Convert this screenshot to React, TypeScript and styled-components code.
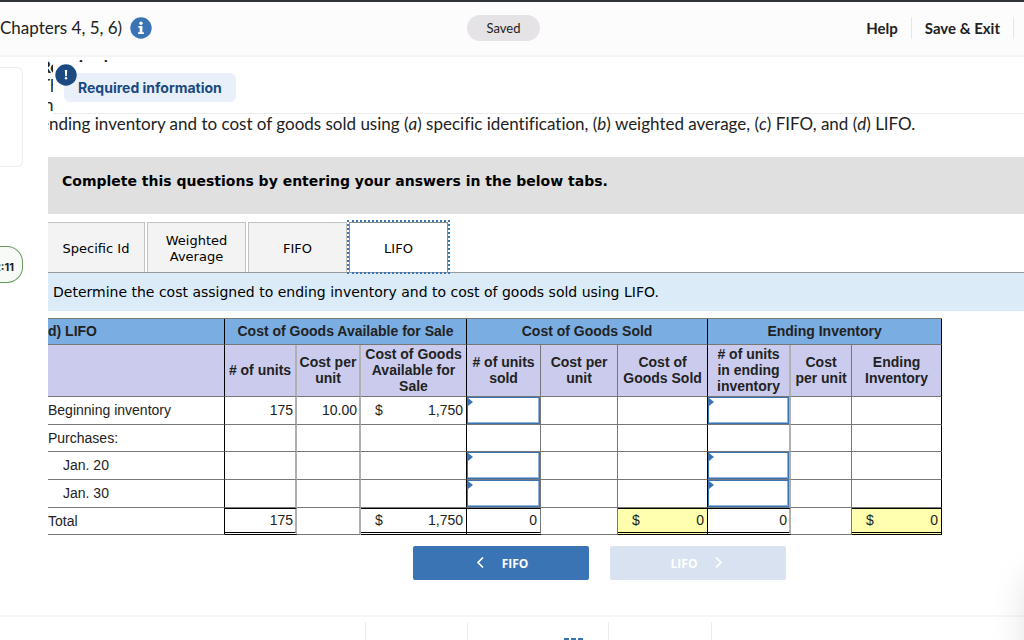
import React from 'react';
import styled, { createGlobalStyle, css } from 'styled-components';

const PROSE = '"Lato", "Liberation Sans", sans-serif';
const WIDE = '"DejaVu Sans", Verdana, sans-serif';
const SHEET = '"Liberation Sans", Arial, sans-serif';

const GlobalStyle = createGlobalStyle`
  *, *::before, *::after { box-sizing: border-box; }
  body {
    margin: 0;
    background: #fff;
    color: #222;
    font-family: ${PROSE};
    font-variant-ligatures: none;
    overflow: hidden;
  }
  button, input { font: inherit; color: inherit; margin: 0; border-radius: 0; }
  p, h1, h2 { margin: 0; }
`;

const Page = styled.div`
  display: flex;
  flex-direction: column;
  height: 100vh;
  overflow: hidden;
  position: relative;
`;

const Header = styled.header`
  display: grid;
  grid-template-columns: 1fr auto 1fr;
  align-items: center;
  flex: none;
  height: 57px;
  padding-bottom: 2px;
  border-top: 2px solid #2f3338;
  border-bottom: 2px solid #f5f5f5;
  background: #fcfcfc;
`;

const Title = styled.h1`
  display: flex;
  align-items: center;
  gap: 8px;
  font-size: 17px;
  font-weight: 400;
  line-height: 20px;
  white-space: nowrap;
`;

const InfoButton = styled.button`
  display: flex;
  padding: 0;
  border: 0;
  background: none;
`;

const SavedPill = styled.span`
  padding: 0 20px;
  margin-right: 17px;
  border-radius: 13px;
  background: #e5e3e6;
  font-size: 13px;
  line-height: 26px;
`;

const Actions = styled.nav`
  display: flex;
  justify-content: flex-end;
  padding-right: 10px;
`;

const ActionLink = styled.a`
  padding: 0 13px;
  border-right: 1px solid #e6e6e6;
  color: #222;
  font-size: 15px;
  font-weight: 700;
  line-height: 22px;
  text-decoration: none;
`;

const Body = styled.div`
  display: flex;
  flex: 1;
  min-height: 0;
`;

const Rail = styled.aside`
  flex: none;
  width: 48px;
  padding: 10px 25px 0 0;
  overflow: hidden;
`;

const RailCard = styled.div`
  height: 100px;
  border: 1px solid #ececec;
  border-left: 0;
  border-radius: 0 6px 6px 0;
`;

const Timer = styled.div`
  display: flex;
  justify-content: flex-end;
  height: 37px;
  margin-top: 79px;
  padding-right: 8px;
  border: 1px solid #659a5b;
  border-left: 0;
  border-radius: 0 16px 16px 0;
  background: #f7faf6;
  font: 700 11px/40px Inter, sans-serif;
`;

const Content = styled.main`
  flex: 1;
  min-width: 0;
  position: relative;
  overflow: hidden;
`;

const Prose = styled.div`
  margin-left: -8px;
  height: 100px;
  font-size: 17px;
  line-height: 19px;
  white-space: nowrap;
  h2 { font-size: 17px; line-height: 19px; }
`;

const RequiredPanel = styled.section`
  position: absolute;
  top: 5px;
  left: 5px;
  right: 0;
  height: 52px;
  padding: 11px;
  border-bottom: 1px solid #ececec;
  background: #fff;
`;

const RequiredChip = styled.div`
  display: inline-block;
  padding: 0 14px;
  border-radius: 6px;
  background: #e9f0f9;
  color: #1a4a80;
  font: 700 14px/29px Inter, sans-serif;
`;

const AlertBadge = styled.span`
  position: absolute;
  top: 2px;
  left: 2px;
  display: flex;
`;

const Banner = styled.div`
  height: 57px;
  padding: 14px;
  background: #e0e0e0;
  color: #000;
  font: 700 14px/20px ${WIDE};
`;

const Tabs = styled.div`
  display: flex;
  gap: 2px;
  margin-top: 8px;
  border-bottom: 1px solid #999;
`;

const Tab = styled.button<{ $first?: boolean; $active?: boolean }>`
  width: ${p => (p.$first ? 97 : 99)}px;
  height: 50px;
  padding: 2px 12px 0;
  border: 1px solid ${p => (p.$active ? '#8c8c8c' : '#c2c2c2')};
  border-width: ${p => (p.$first ? '1px 1px 0 0' : '1px 1px 0 1px')};
  background: ${p => (p.$active ? '#fff' : '#f3f3f3')};
  color: #000;
  font: 13px/16px ${WIDE};
  ${p => p.$active && css`outline: 2px dotted #3b74b4;`}
`;

const Instruction = styled.p`
  padding: 0 5px;
  background: #dbecf8;
  color: #000;
  font: 14px/38px ${WIDE};
`;

const Sheet = styled.table`
  table-layout: fixed;
  width: 894px;
  margin-top: 7px;
  border-collapse: separate;
  border-spacing: 0;
  border-top: 1px solid #777;
  color: #222;
  font: 14px/16px ${SHEET};
`;

type Edge = 'group' | 'soft' | 'thin';
const edges: Record<Edge, string> = {
  group: '1px solid #000',
  soft: '2px solid #b0b0b0',
  thin: '1px solid #777',
};

const GroupHead = styled.th<{ $left?: boolean }>`
  height: 26px;
  padding: 0 0 2px;
  border-right: 1px solid #000;
  border-bottom: 1px solid #777;
  background: #7aade2;
  text-align: ${p => (p.$left ? 'left' : 'center')};
`;

const ColumnHead = styled.th<{ $edge: Edge }>`
  height: 52px;
  padding: 0 2px 2px;
  border-right: ${p => edges[p.$edge]};
  border-bottom: 1px solid #777;
  background: #cbcced;
`;

const RowHead = styled.th<{ $indent?: boolean }>`
  padding: 0 0 1px ${p => (p.$indent ? 15 : 0)}px;
  border-right: 1px solid #000;
  border-bottom: 1px solid #777;
  font-weight: 400;
  text-align: left;
`;

const Cell = styled.td<{ $edge: Edge; $short?: boolean; $total?: boolean; $result?: boolean }>`
  position: relative;
  height: ${p => (p.$short ? 27 : 28)}px;
  padding: 0 ${p => (p.$edge === 'soft' ? 2 : 3)}px 1px 14px;
  border-right: ${p => edges[p.$edge]};
  border-bottom: 1px solid #777;
  text-align: right;
  ${p => p.$result && css`background: #ffffad;`}
  ${p => p.$total && css`
    border-top: 1px solid #000;
    border-bottom: 3px double #000;
  `}
`;

const InputCell = styled(Cell)`
  padding: 0;
  &::before {
    content: '';
    position: absolute;
    top: 1px;
    left: 1px;
    border: 4px solid transparent;
    border-left: 5px solid #3b74b4;
    border-right: 0;
  }
`;

const Entry = styled.input`
  display: block;
  width: 100%;
  height: 27px;
  padding: 0 4px;
  border: 1px solid #3b74b4;
  background: #fff;
  box-shadow: inset -1px -1px 0 #8fb4dc;
  text-align: right;
  outline: 0;
`;

const Money = styled.span`
  display: flex;
  justify-content: space-between;
`;

const Pager = styled.div`
  display: flex;
  gap: 21px;
  margin: 11px 0 0 365px;
`;

const PageButton = styled.button`
  display: flex;
  align-items: center;
  justify-content: center;
  gap: 14px;
  width: 176px;
  height: 34px;
  padding: 2px 0 0;
  border: 0;
  border-radius: 2px;
  background: #3b74b4;
  color: #fff;
  font: 700 12px/16px "Open Sans", sans-serif;
  &:disabled { background: #d8e2f0; }
`;

const Footer = styled.footer`
  display: flex;
  justify-content: center;
  flex: none;
  height: 25px;
  padding: 5px 0 0 52px;
  border-top: 2px solid #f7f7f7;
  overflow: hidden;
`;

const FooterCell = styled.div<{ $width: number }>`
  display: flex;
  justify-content: flex-end;
  width: ${p => p.$width}px;
  padding: 16px 25px 0 0;
  border-left: 1px solid #ececec;
  &:last-child { border-right: 1px solid #ececec; }
`;

const CornerShadow = styled.div`
  position: absolute;
  right: -60px;
  bottom: -40px;
  width: 60px;
  height: 110px;
  border-radius: 30px;
  box-shadow: 0 0 36px rgba(0, 0, 0, 0.11);
  pointer-events: none;
`;

const Chevron = ({ next }: { next?: boolean }) => (
  <svg width="14" height="14" viewBox="0 0 14 14" fill="none" stroke="currentColor" strokeWidth="1.7" aria-hidden="true">
    <path d={next ? 'M5 .5 10 5.5 5 10.5' : 'M9 .5 4 5.5 9 10.5'} />
  </svg>
);

const columns: { label: string; width: number; edge: Edge }[] = [
  { label: '# of units', width: 72, edge: 'soft' },
  { label: 'Cost per unit', width: 64, edge: 'soft' },
  { label: 'Cost of Goods Available for Sale', width: 106, edge: 'group' },
  { label: '# of units sold', width: 74, edge: 'thin' },
  { label: 'Cost per unit', width: 77, edge: 'thin' },
  { label: 'Cost of Goods Sold', width: 90, edge: 'group' },
  { label: '# of units in ending inventory', width: 83, edge: 'soft' },
  { label: 'Cost per unit', width: 61, edge: 'thin' },
  { label: 'Ending Inventory', width: 90, edge: 'group' },
];

type Row = { label: string; values: string[]; entry?: boolean; indent?: boolean; short?: boolean; total?: boolean };

const rows: Row[] = [
  { label: 'Beginning inventory', values: ['175', '10.00', '$1,750'], entry: true },
  { label: 'Purchases:', values: [], short: true },
  { label: 'Jan. 20', values: [], indent: true, entry: true },
  { label: 'Jan. 30', values: [], indent: true, entry: true },
  { label: 'Total', values: ['175', '', '$1,750', '0', '', '$0', '0', '', '$0'], short: true, total: true },
];

const Amount = ({ value = '' }: { value?: string }) =>
  value.startsWith('$') ? <Money><span>$</span><span>{value.slice(1)}</span></Money> : <>{value}</>;

export default function App() {
  return (
    <Page>
      <GlobalStyle />
      <Header>
        <Title>
          Chapters 4, 5, 6)
          <InfoButton aria-label="Information">
            <svg width="22" height="22" viewBox="0 0 22 22" aria-hidden="true">
              <circle cx="11" cy="11" r="10.7" fill="#3b74b4" />
              <circle cx="11" cy="6.2" r="1.7" fill="#fff" />
              <path d="M8.3 9h4.1v6.2h1.5v1.7H8.1v-1.7h1.6v-4.5H8.3z" fill="#fff" />
            </svg>
          </InfoButton>
        </Title>
        <SavedPill>Saved</SavedPill>
        <Actions>
          <ActionLink href="#help">Help</ActionLink>
          <ActionLink href="#exit">Save &amp; Exit</ActionLink>
        </Actions>
      </Header>
      <Body>
        <Rail>
          <RailCard />
          <Timer>2:11</Timer>
        </Rail>
        <Content>
          <Prose>
            <h2>Required:</h2>
            <p>The</p>
            <p>in</p>
            <p>
              ending inventory and to cost of goods sold using (<i>a</i>) specific identification, (<i>b</i>) weighted
              average, (<i>c</i>) FIFO, and (<i>d</i>) LIFO.
            </p>
          </Prose>
          <RequiredPanel>
            <RequiredChip>Required information</RequiredChip>
            <AlertBadge>
              <svg width="22" height="22" viewBox="0 0 22 22" aria-hidden="true">
                <circle cx="11" cy="11" r="10.7" fill="#1a4a80" />
                <path d="M9.8 6h2.4l-.4 6.2h-1.6z" fill="#fff" />
                <circle cx="11" cy="14.2" r="1.2" fill="#fff" />
              </svg>
            </AlertBadge>
          </RequiredPanel>
          <Banner>Complete this questions by entering your answers in the below tabs.</Banner>
          <Tabs role="tablist">
            <Tab role="tab" $first>Specific Id</Tab>
            <Tab role="tab">Weighted Average</Tab>
            <Tab role="tab">FIFO</Tab>
            <Tab role="tab" $active aria-selected="true">LIFO</Tab>
          </Tabs>
          <Instruction>Determine the cost assigned to ending inventory and to cost of goods sold using LIFO.</Instruction>
          <Sheet>
            <colgroup>
              <col width={177} />
              {columns.map((c, i) => <col key={i} width={c.width} />)}
            </colgroup>
            <thead>
              <tr>
                <GroupHead $left>d) LIFO</GroupHead>
                <GroupHead colSpan={3}>Cost of Goods Available for Sale</GroupHead>
                <GroupHead colSpan={3}>Cost of Goods Sold</GroupHead>
                <GroupHead colSpan={3}>Ending Inventory</GroupHead>
              </tr>
              <tr>
                <ColumnHead $edge="group" />
                {columns.map((c, i) => <ColumnHead key={i} $edge={c.edge}>{c.label}</ColumnHead>)}
              </tr>
            </thead>
            <tbody>
              {rows.map(row => (
                <tr key={row.label}>
                  <RowHead scope="row" $indent={row.indent}>{row.label}</RowHead>
                  {columns.map((c, i) =>
                    row.entry && (i === 3 || i === 6) ? (
                      <InputCell key={i} $edge={c.edge}>
                        <Entry aria-label={`${row.label}, ${c.label}`} />
                      </InputCell>
                    ) : (
                      <Cell
                        key={i}
                        $edge={c.edge}
                        $short={row.short}
                        $total={row.total && !!row.values[i]}
                        $result={row.total && (i === 5 || i === 8)}
                      >
                        <Amount value={row.values[i]} />
                      </Cell>
                    )
                  )}
                </tr>
              ))}
            </tbody>
          </Sheet>
          <Pager>
            <PageButton><Chevron />FIFO</PageButton>
            <PageButton disabled>LIFO<Chevron next /></PageButton>
          </Pager>
        </Content>
      </Body>
      <Footer>
        <FooterCell $width={102} />
        <FooterCell $width={141}>
          <svg width="19" height="14" viewBox="0 0 19 14" fill="#3b74b4" aria-hidden="true">
            <path d="M0 0h5v4H0zM7 0h5v4H7zM14 0h5v4h-5zM0 6h5v4H0zM7 6h5v4H7zM14 6h5v4h-5z" />
          </svg>
        </FooterCell>
        <FooterCell $width={104} />
      </Footer>
      <CornerShadow />
    </Page>
  );
}
